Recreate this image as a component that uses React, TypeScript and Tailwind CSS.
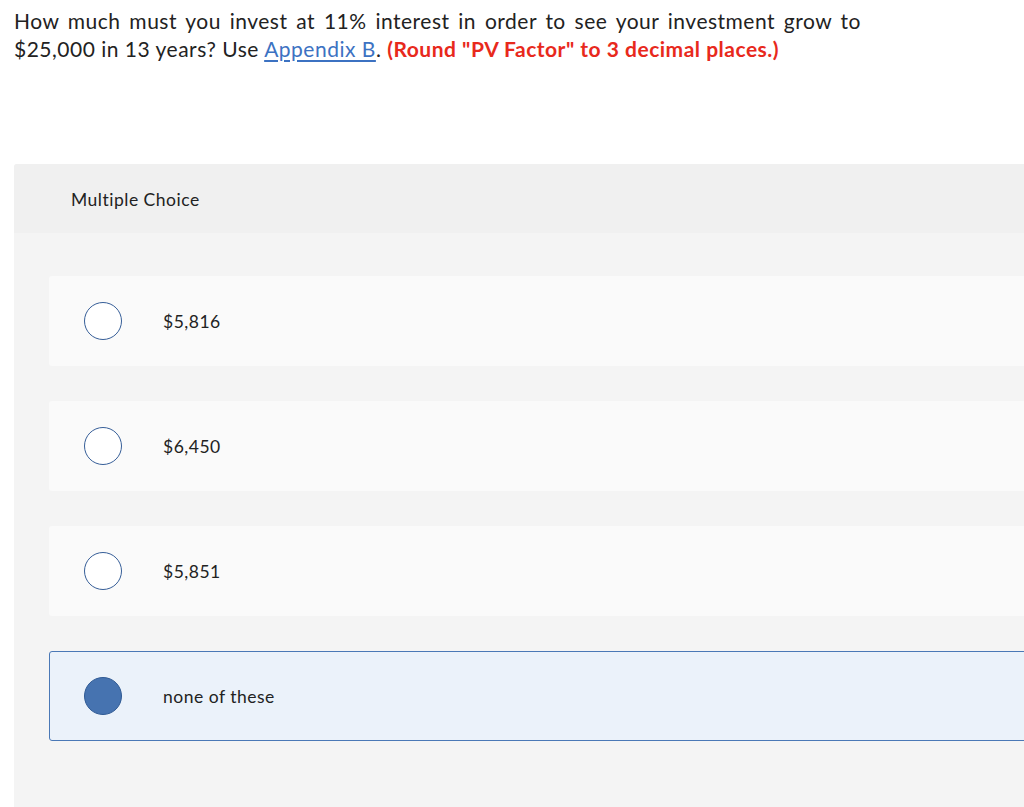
import React from 'react'

type Choice = { id: string; label: string }

const choices: Choice[] = [
  { id: 'a', label: '$5,816' },
  { id: 'b', label: '$6,450' },
  { id: 'c', label: '$5,851' },
  { id: 'd', label: 'none of these' }
]

const ChoiceRow: React.FC<{ choice: Choice; selected: boolean }> = ({
  choice,
  selected
}): JSX.Element => (
  <div
    className={
      selected
        ? 'h-[90px] flex items-center rounded-[3px] border border-[#4a78b6] bg-[#ebf2fa]'
        : 'h-[90px] flex items-center rounded-[3px] border border-transparent bg-[#fafafa]'
    }
  >
    <div className="w-[105px] flex justify-center">
      <span
        className={
          selected
            ? 'block w-[38px] h-[38px] rounded-full border-[1.5px] border-[#2f5a94] bg-[#4673b0]'
            : 'block w-[38px] h-[38px] rounded-full border-[1.5px] border-[#365e98] bg-white'
        }
      />
    </div>
    <span className="ml-[8px] pt-[2px] text-[17.5px] tracking-[0.5px] text-[#222]">
      {choice.label}
    </span>
  </div>
)

const App: React.FC = (): JSX.Element => {
  const selectedId = 'd'

  return (
    <div
      className="w-[1024px] h-[807px] overflow-hidden bg-white text-[#222]"
      style={{ fontFamily: 'Lato, "Open Sans", sans-serif' }}
    >
      <div className="pl-[14px] pt-[7px] text-[21px] leading-[28px] tracking-[0.5px]">
        <div className="w-[847px] text-justify [text-align-last:justify]">
          How much must you invest at 11% interest in order to see your investment grow to
        </div>
        <div>
          $25,000 in 13 years? Use{' '}
          <a className="text-[#3c72c2] underline underline-offset-[3px]" href="#">
            Appendix B
          </a>
          .{' '}
          <span className="font-bold text-[#e8291c]">
            (Round "PV Factor" to 3 decimal places.)
          </span>
        </div>
      </div>

      <div className="ml-[14px] mt-[101px] w-[1100px] rounded-tl-[3px] bg-[#f4f4f4]">
        <div className="h-[69px] flex items-center pl-[57px] pt-[3px] bg-[#f0f0f0] rounded-tl-[3px]">
          <span className="text-[17.5px] tracking-[0.5px] text-[#222]">Multiple Choice</span>
        </div>
        <div className="pl-[35px] pt-[43px] pb-[80px] flex flex-col gap-[35px]">
          {choices.map((choice) => (
            <ChoiceRow
              key={choice.id}
              choice={choice}
              selected={choice.id === selectedId}
            />
          ))}
        </div>
      </div>
    </div>
  )
}

export default App
